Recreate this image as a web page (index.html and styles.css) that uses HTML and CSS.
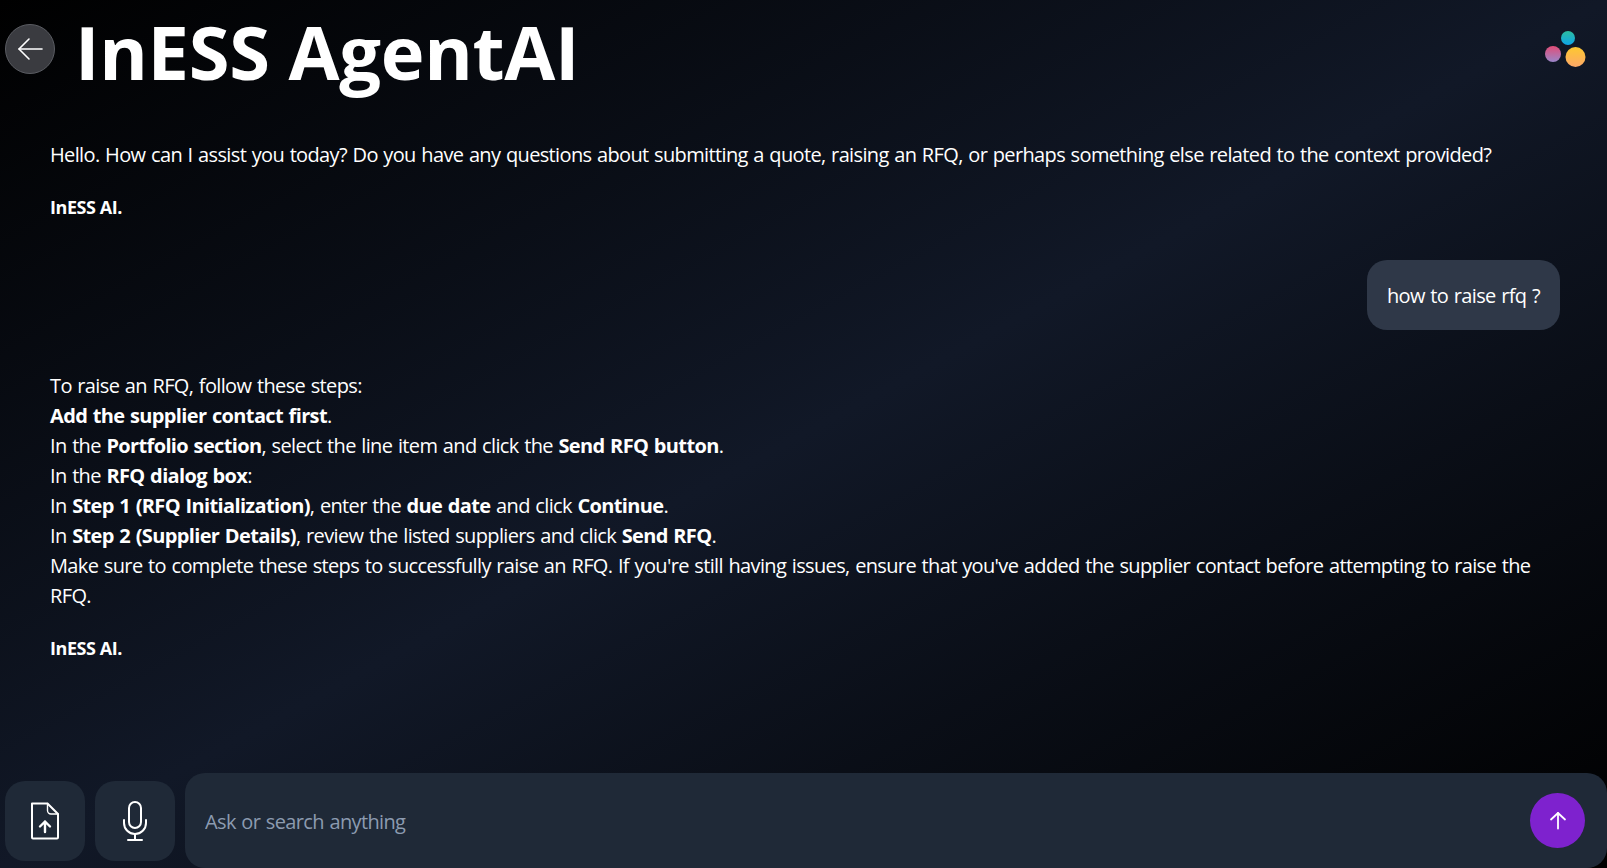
FILE: index.html
```html
<!DOCTYPE html>
<html>
<head>
    <title>InESS AgentAI</title>
    <link rel="stylesheet" href="styles.css">
</head>
<body>
    <div class="page">
        <header class="top-bar">
            <button class="back-button" aria-label="Back">
                <svg width="30" height="30" viewBox="0 0 30 30" fill="none" stroke="#fff" stroke-width="1.6" stroke-linecap="round" stroke-linejoin="round">
                    <path d="M27 15H4"/>
                    <path d="M14 5L4 15l10 10"/>
                </svg>
            </button>
            <h1 class="title">InESS AgentAI</h1>
            <svg class="logo" width="44" height="44" viewBox="0 0 44 44">
                <defs>
                    <linearGradient id="dot-teal" x1="0" y1="0" x2="0" y2="1">
                        <stop offset="0" stop-color="#2dbd9f"/>
                        <stop offset="1" stop-color="#0ea5e9"/>
                    </linearGradient>
                    <linearGradient id="dot-pink" x1="0" y1="0" x2="0" y2="1">
                        <stop offset="0" stop-color="#e14d78"/>
                        <stop offset="1" stop-color="#9a86c9"/>
                    </linearGradient>
                    <linearGradient id="dot-yellow" x1="0" y1="0" x2="0" y2="1">
                        <stop offset="0" stop-color="#fdc830"/>
                        <stop offset="1" stop-color="#fda868"/>
                    </linearGradient>
                </defs>
                <circle cx="25" cy="10" r="7" fill="url(#dot-teal)"/>
                <circle cx="10" cy="26" r="8" fill="url(#dot-pink)"/>
                <circle cx="32.500" cy="29" r="10" fill="url(#dot-yellow)"/>
            </svg>
        </header>

        <main class="chat">
            <div class="bot-message">
                <p class="message-text">Hello. How can I assist you today? Do you have any questions about submitting a quote, raising an RFQ, or perhaps something else related to the context provided?</p>
                <p class="signature">InESS AI.</p>
            </div>

            <div class="user-message">
                <div class="bubble">how to raise rfq ?</div>
            </div>

            <div class="bot-message">
                <p class="message-text">To raise an RFQ, follow these steps:<br>
                <b>Add the supplier contact first</b>.<br>
                In the <b>Portfolio section</b>, select the line item and click the <b>Send RFQ button</b>.<br>
                In the <b>RFQ dialog box</b>:<br>
                In <b>Step 1 (RFQ Initialization)</b>, enter the <b>due date</b> and click <b>Continue</b>.<br>
                In <b>Step 2 (Supplier Details)</b>, review the listed suppliers and click <b>Send RFQ</b>.<br>
                Make sure to complete these steps to successfully raise an RFQ. If you're still having issues, ensure that you've added the supplier contact before attempting to raise the RFQ.</p>
                <p class="signature">InESS AI.</p>
            </div>
        </main>

        <footer class="input-row">
            <button class="tool-button" aria-label="Upload file">
                <svg width="32" height="40" viewBox="0 0 32 40" fill="none" stroke="#fff" stroke-width="2" stroke-linejoin="round" stroke-linecap="round">
                    <path d="M3 2.500h15.500L29 13v23.500a1 1 0 0 1-1 1H4a1 1 0 0 1-1-1z"/>
                    <path d="M18.500 2.500v7a3.500 3.500 0 0 0 3.500 3.500h7" stroke-width="1.400"/>
                    <path d="M16 31V20.500M11 25.500l5-5 5 5" stroke-width="2.400"/>
                </svg>
            </button>
            <button class="tool-button" aria-label="Voice input">
                <svg width="32" height="42" viewBox="0 0 32 42" fill="none" stroke="#fff" stroke-width="2" stroke-linecap="round">
                    <rect x="10" y="2" width="12" height="26" rx="6"/>
                    <path d="M5 20v3a11 11 0 0 0 22 0v-3"/>
                    <path d="M16 34v6M9 40h14"/>
                </svg>
            </button>
            <div class="search-box">
                <input class="search-input" type="text" placeholder="Ask or search anything">
                <button class="send-button" aria-label="Send">
                    <svg width="20" height="20" viewBox="0 0 20 20" fill="none" stroke="#fff" stroke-width="1.800" stroke-linecap="round" stroke-linejoin="round">
                        <path d="M10 17.500V2"/>
                        <path d="M3 8.500L10 2l7 6.500"/>
                    </svg>
                </button>
            </div>
        </footer>
    </div>
</body>
</html>
```

FILE: styles.css
```css
/* General Styles */
html, body {
    height: 100%;
}

body {
    margin: 0;
    font-family: 'Open Sans', 'Noto Sans', Arial, sans-serif;
    color: #fff;
    background: #000;
    overflow: hidden;
}

.page {
    height: 868px;
    display: flex;
    flex-direction: column;
    background: linear-gradient(to bottom right, #000 0%, #111827 50%, #000 100%);
}

/* Header */
.top-bar {
    height: 100px;
    flex-shrink: 0;
    display: flex;
    align-items: center;
    padding: 0 20px 0 5px;
}

.back-button {
    width: 50px;
    height: 50px;
    padding: 0;
    display: flex;
    align-items: center;
    justify-content: center;
    flex-shrink: 0;
    background: #3a3b40;
    border: 1px solid #5a5c62;
    border-radius: 50%;
    margin: 0 20px 2px 0;
}

.title {
    margin: 0;
    padding-top: 3px;
    font-size: 74px;
    line-height: 1;
    font-weight: 700;
    letter-spacing: -0.3px;
    white-space: nowrap;
}

.logo {
    margin-left: auto;
}

/* Chat */
.chat {
    flex: 1;
    padding: 40px 47px 0 50px;
    font-size: 20px;
    line-height: 30px;
    letter-spacing: -0.64px;
    word-spacing: 1px;
}

.message-text {
    margin: 0;
}

.signature {
    margin: 22px 0 0;
    font-size: 18px;
    font-weight: 700;
    letter-spacing: -0.45px;
    word-spacing: 0;
}

.user-message {
    display: flex;
    justify-content: flex-end;
    margin: 38px 0 41px;
}

.bubble {
    background: #2f3848;
    border-radius: 20px;
    padding: 21px 20px 19px;
    height: 30px;
}

/* Bottom input */
.input-row {
    height: 95px;
    flex-shrink: 0;
    display: flex;
    align-items: center;
    gap: 10px;
    padding-left: 5px;
}

.tool-button {
    width: 80px;
    height: 80px;
    padding: 0;
    display: flex;
    align-items: center;
    justify-content: center;
    flex-shrink: 0;
    background: #1f2937;
    border: none;
    border-radius: 20px;
}

.search-box {
    flex: 1;
    height: 95px;
    display: flex;
    align-items: center;
    background: #1f2937;
    border-radius: 20px;
    padding: 0 22px 0 20px;
}

.search-input {
    flex: 1;
    padding: 2px 0 0;
    background: transparent;
    border: none;
    outline: none;
    color: #fff;
    font-family: inherit;
    font-size: 20px;
    letter-spacing: -0.64px;
    word-spacing: 1px;
}

.search-input::placeholder {
    color: #8c9bb0;
    opacity: 1;
}

.send-button {
    width: 55px;
    height: 55px;
    padding: 0;
    display: flex;
    align-items: center;
    justify-content: center;
    flex-shrink: 0;
    background: #7e22ce;
    border: none;
    border-radius: 50%;
}
```
